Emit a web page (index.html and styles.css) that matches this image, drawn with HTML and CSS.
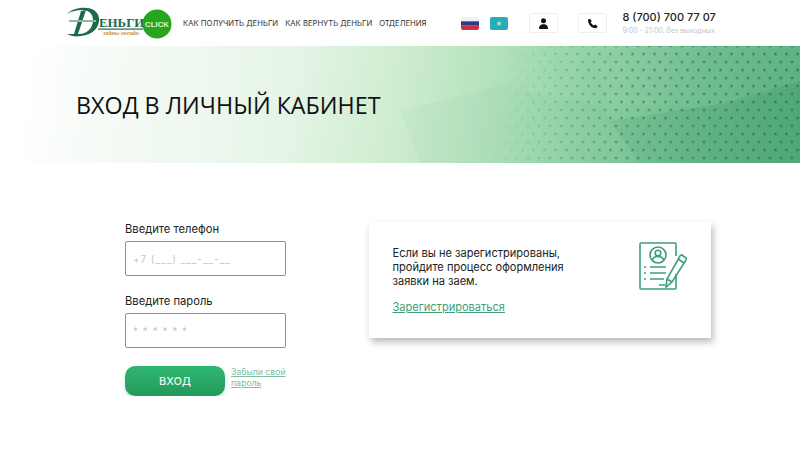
FILE: index.html
```html
<!DOCTYPE html>
<html lang="ru">

<head>
    <meta charset="UTF-8">
    <meta name="viewport" content="width=device-width, initial-scale=1.0">
    <title>Вход в личный кабинет</title>
    <link rel="stylesheet" href="styles.css">
</head>

<body>
    <header class="header">
        <a class="logo" href="#">
            <svg width="106" height="38" viewBox="0 0 106 38">
                <path d="M1 31 C5 33 10 34 15 33 C27 32 34 24 33 15 C32 7 24 4 14 5 C9 5.500 4 8 1 11 C6 8 11 7 16 7 C23 7 27 11 27 17 C27 25 21 31 13 31 C9 31 5 31 1 31 Z" fill="#1b6b4a"/>
                <path d="M15 8 L8 31 L12 31 L20 7 Z" fill="#1b6b4a"/>
                <rect x="3" y="17" width="27" height="2" fill="#8fb9a0"/>
                <text class="logo-word" x="33" y="24">ЕНЬГИ</text>
                <rect x="32" y="25.500" width="45" height="1.200" fill="#1b6b4a"/>
                <text class="logo-tag" x="37" y="32">займы онлайн</text>
                <circle cx="91" cy="21" r="14.500" fill="#27a51f"/>
                <text class="logo-click" x="91" y="23.800" text-anchor="middle">CLICK</text>
            </svg>
        </a>
        <nav class="nav">
            <a href="#">КАК ПОЛУЧИТЬ ДЕНЬГИ</a>
            <a href="#">КАК ВЕРНУТЬ ДЕНЬГИ</a>
            <a href="#">ОТДЕЛЕНИЯ</a>
        </nav>
        <div class="flags">
            <svg class="flag" width="18" height="13" viewBox="0 0 18 13">
                <rect width="18" height="4.300" fill="#f1f1f4"/>
                <rect y="4.300" width="18" height="4.400" fill="#2c3a8c"/>
                <rect y="8.700" width="18" height="4.300" fill="#c8323c"/>
            </svg>
            <svg class="flag" width="18" height="13" viewBox="0 0 18 13">
                <rect width="18" height="13" fill="#25aeb9"/>
                <circle cx="9" cy="6.500" r="2" fill="#a8dcc0"/>
            </svg>
        </div>
        <a class="icon-btn icon-btn-user" href="#">
            <svg width="11" height="11" viewBox="0 0 11 11">
                <circle cx="5.500" cy="2.800" r="2.500" fill="#111"/>
                <path d="M1 11 C1 7.500 3 6.300 5.500 6.300 C8 6.300 10 7.500 10 11 Z" fill="#111"/>
            </svg>
        </a>
        <a class="icon-btn icon-btn-phone" href="#">
            <svg width="11" height="11" viewBox="0 0 24 24">
                <path d="M6.600 1.500 L2.500 3.500 C1.500 9 4 14 7.500 17.500 C11 21 16 23 21 22 L23 17.500 L17.500 14 L15 16.500 C12.500 15.500 9 12 8 9.500 L10.500 7 Z" fill="#111"/>
            </svg>
        </a>
        <div class="contact">
            <div class="contact-phone">8 (700) 700 77 07</div>
            <div class="contact-hours">9:00 - 21:00, без выходных</div>
        </div>
    </header>

    <section class="hero">
        <svg class="hero-facets" viewBox="0 0 800 117" preserveAspectRatio="none">
            <polygon points="400,65 500,40 600,60 640,117 420,117" fill="#1f8a55" opacity="0.03"/>
            <polygon points="590,0 800,0 800,40 720,60 610,60" fill="#ffffff" opacity="0.04"/>
            <polygon points="610,75 720,58 800,35 800,117 640,117" fill="#0f6b42" opacity="0.1"/>
        </svg>
        <div class="hero-dots"></div>
        <h1>ВХОД В ЛИЧНЫЙ КАБИНЕТ</h1>
    </section>

    <main class="content">
        <form class="login-form">
            <label class="field">
                <span class="field-label">Введите телефон</span>
                <input type="text" placeholder="+7 (___) ___-__-__">
            </label>
            <label class="field">
                <span class="field-label">Введите пароль</span>
                <input type="text" placeholder="* * * * * *">
            </label>
            <div class="form-actions">
                <button type="button" class="login-btn">ВХОД</button>
                <a class="forgot" href="#">Забыли свой пароль</a>
            </div>
        </form>

        <aside class="register-card">
            <div class="register-text">
                <p>Если вы не зарегистрированы, пройдите процесс оформления заявки на заем.</p>
                <a href="#">Зарегистрироваться</a>
            </div>
            <svg class="register-icon" width="48" height="48" viewBox="0 0 48 48" fill="none" stroke="#3c9f78" stroke-width="1.600">
                <path d="M37 14 V2 Q37 1 36 1 H2 Q1 1 1 2 V46 Q1 47 2 47 H36 Q37 47 37 46 V32"/>
                <circle cx="19" cy="13" r="8"/>
                <circle cx="19" cy="11" r="2.800"/>
                <path d="M13.500 18 C14 15 16.500 14.500 19 14.500 C21.500 14.500 24 15 24.500 18"/>
                <path d="M11 25 H27 M11 31 H27 M11 37 H25 M20 43 H26"/>
                <path d="M5 25 H7 M5 31 H7 M5 37 H7"/>
                <path d="M43 13 L47 16 Q48 17 47 18 L33 40 L27 45 L28 37 L41 14 Q42 12.500 43 13 Z"/>
                <path d="M39 17 L45 21 M28 37 L33 40"/>
            </svg>
        </aside>
    </main>
</body>

</html>
```

FILE: styles.css
```css
body {
    margin: 0;
    background-color: #fff;
    font-family: "Inter", "Open Sans", sans-serif;
    color: #222;
}

a {
    text-decoration: none;
    color: inherit;
}

.header {
    display: flex;
    align-items: center;
    height: 46px;
    padding-left: 66px;
    box-sizing: border-box;
}

.logo {
    display: block;
    width: 106px;
    height: 38px;
    margin-top: -3px;
}

.logo-word {
    font-family: "Liberation Serif", serif;
    font-size: 12.900px;
    font-weight: bold;
    fill: #1b6b4a;
}

.logo-tag {
    font-family: "Liberation Sans", sans-serif;
    font-size: 5px;
    font-weight: bold;
    fill: #c8963c;
}

.logo-click {
    font-family: "Liberation Sans", sans-serif;
    font-size: 7.800px;
    font-weight: bold;
    fill: #dff5d8;
}

.nav {
    display: flex;
    gap: 7px;
    margin-left: 11px;
    font-size: 7.700px;
    color: #333;
}

.flags {
    display: flex;
    gap: 11px;
    margin-left: 34px;
}

.flag {
    display: block;
    border-radius: 2px;
}

.icon-btn {
    display: flex;
    align-items: center;
    justify-content: center;
    width: 29px;
    height: 20px;
    border: 1px solid #eee;
    border-radius: 2px;
    box-sizing: border-box;
}

.icon-btn-user {
    margin-left: 21px;
}

.icon-btn-phone {
    margin-left: 20px;
}

.contact {
    margin-left: 16px;
    margin-top: -1px;
}

.contact-phone {
    font-size: 11px;
    font-weight: 500;
    line-height: 15px;
    color: #222;
}

.contact-hours {
    font-size: 7px;
    line-height: 11px;
    color: #c4c4c4;
}

.hero {
    position: relative;
    height: 117px;
    overflow: hidden;
    background: linear-gradient(97deg, #ffffff 3%, #f5fbf6 14%, #e6f5e7 36%, #cdeccf 50%, #b0e1ba 62%, #8ccfa2 74%, #6cbb8c 87%, #55ad7c 100%);
}

.hero-facets {
    position: absolute;
    top: 0;
    left: 0;
    width: 100%;
    height: 100%;
}

.hero-dots {
    position: absolute;
    top: 0;
    left: 0;
    width: 100%;
    height: 100%;
    background-image:
        radial-gradient(circle, rgba(30, 125, 80, 0.85) 0.7px, transparent 1.900px),
        radial-gradient(circle, rgba(30, 125, 80, 0.85) 0.7px, transparent 1.900px);
    background-size: 11px 16px;
    background-position: 0 0, 5.500px 8px;
    -webkit-mask-image: linear-gradient(100deg, transparent 62%, rgba(0, 0, 0, 0.7) 78%, #000 100%);
    mask-image: linear-gradient(100deg, transparent 62%, rgba(0, 0, 0, 0.7) 78%, #000 100%);
}

.hero h1 {
    position: relative;
    margin: 0;
    padding: 44px 0 0 76px;
    font-family: "Open Sans", sans-serif;
    font-size: 23.300px;
    font-weight: 400;
    line-height: 30px;
    color: #111;
}

.content {
    display: flex;
    align-items: flex-start;
    padding: 59px 0 0 125px;
}

.login-form {
    width: 161px;
}

.field {
    display: block;
    margin-bottom: 18px;
}

.field-label {
    display: block;
    margin-bottom: 5px;
    font-size: 11.200px;
    line-height: 14px;
    color: #222;
}

.field input {
    display: block;
    width: 100%;
    height: 35px;
    padding: 0 7px;
    border: 1px solid #8f8f8f;
    border-radius: 2px;
    box-sizing: border-box;
    font-family: inherit;
    font-size: 10px;
    letter-spacing: 1px;
    outline: none;
}

.field input::placeholder {
    color: #c6c6c6;
}

.form-actions {
    display: flex;
    align-items: flex-start;
    gap: 6px;
    margin-top: 1px;
}

.login-btn {
    flex-shrink: 0;
    width: 100px;
    height: 30px;
    padding: 0;
    border: none;
    border-radius: 10px;
    background: linear-gradient(#2fb871, #22985a);
    box-shadow: 0 4px 6px rgba(40, 150, 90, 0.2);
    color: #e8f5ec;
    font-family: inherit;
    font-size: 11px;
    font-weight: 500;
}

.forgot {
    flex-shrink: 0;
    width: 58px;
    padding-top: 1px;
    font-size: 8.700px;
    line-height: 11px;
    color: #7cc0a2;
    text-decoration: underline;
}

.register-card {
    display: flex;
    justify-content: space-between;
    align-items: flex-start;
    width: 342px;
    height: 116px;
    margin-left: 83px;
    padding: 21px 24px 0 23.500px;
    box-sizing: border-box;
    background-color: #fff;
    box-shadow: 2px 4px 7px rgba(0, 0, 0, 0.28);
}

.register-text {
    width: 190px;
    padding-top: 3px;
    font-size: 11.050px;
    line-height: 14px;
}

.register-text p {
    margin: 0 0 12px;
    color: #222;
}

.register-text a {
    color: #3c9f78;
    text-decoration: underline;
}

.register-icon {
    margin-top: -1px;
}
```
